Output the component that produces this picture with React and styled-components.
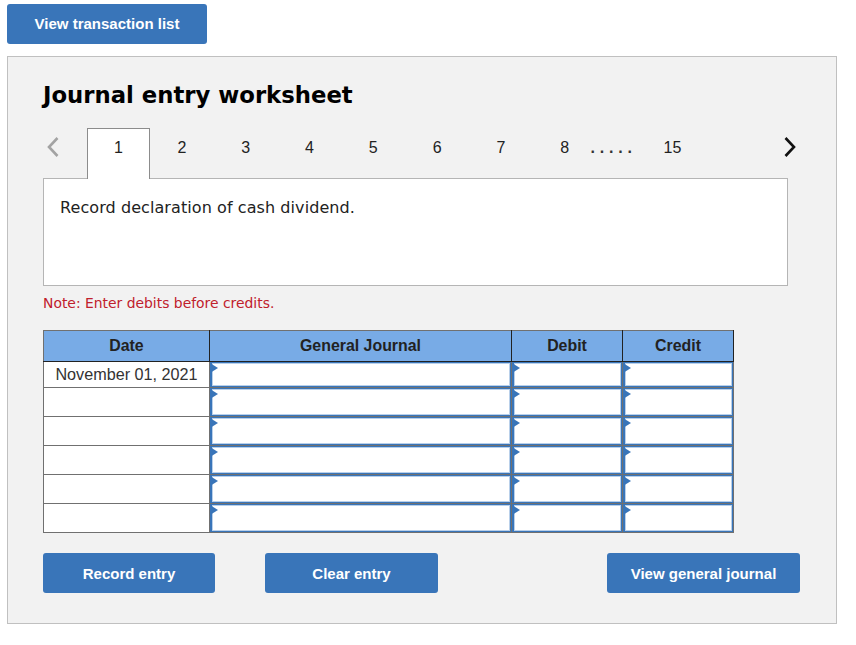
import styled, { createGlobalStyle } from "styled-components";

const GlobalStyle = createGlobalStyle`
  html, body {
    margin: 0;
    background: #ffffff;
    font-family: "Liberation Sans", Arial, sans-serif;
  }
`;

const tabs = ["1", "2", "3", "4", "5", "6", "7", "8"];
const rows = ["November 01, 2021", "", "", "", "", ""];

export default function App() {
  return (
    <Page>
      <GlobalStyle />
      <TopButton>View transaction list</TopButton>
      <Panel>
        <Title>Journal entry worksheet</Title>
        <TabRow>
          <Arrow>
            <svg width="14" height="22" viewBox="0 0 14 22">
              <path d="M11.5 2 L3 11 L11.5 20" fill="none" stroke="#a3a3a3" strokeWidth="2.6" />
            </svg>
          </Arrow>
          {tabs.map((t, i) => (
            <Tab key={t} active={i === 0}>{t}</Tab>
          ))}
          <Dots>.....</Dots>
          <LastTab>15</LastTab>
          <NextArrow>
            <svg width="14" height="22" viewBox="0 0 14 22">
              <path d="M2.5 2 L11 11 L2.5 20" fill="none" stroke="#111111" strokeWidth="2.6" />
            </svg>
          </NextArrow>
        </TabRow>
        <Description>Record declaration of cash dividend.</Description>
        <Note>Note: Enter debits before credits.</Note>
        <Table>
          <colgroup>
            <col width="166" />
            <col width="302" />
            <col width="111" />
            <col width="111" />
          </colgroup>
          <thead>
            <tr>
              <Head>Date</Head>
              <Head>General Journal</Head>
              <Head>Debit</Head>
              <Head>Credit</Head>
            </tr>
          </thead>
          <tbody>
            {rows.map((date, i) => (
              <Row key={i} first={i === 0}>
                <DateCell>{date}</DateCell>
                <EntryCell><Field /></EntryCell>
                <EntryCell><Field /></EntryCell>
                <EntryCell><Field /></EntryCell>
              </Row>
            ))}
          </tbody>
        </Table>
        <Actions>
          <ActionButton width={172}>Record entry</ActionButton>
          <ActionButton width={173}>Clear entry</ActionButton>
          <ActionButton width={193} push>View general journal</ActionButton>
        </Actions>
      </Panel>
    </Page>
  );
}

const Page = styled.div`
  padding: 4px 19px 21px 7px;
`;

const Button = styled.button`
  height: 40px;
  border: none;
  border-radius: 3px;
  background: #3975b9;
  color: #ffffff;
  font-family: "Liberation Sans", Arial, sans-serif;
  font-size: 15px;
  font-weight: 700;
  padding: 0;
`;

const TopButton = styled(Button)`
  display: block;
  width: 200px;
  padding-bottom: 2px;
`;

const Panel = styled.div`
  margin-top: 12px;
  height: 566px;
  border: 1px solid #c0c0c0;
  background: #f2f2f2;
  padding: 0 35px;
`;

const Title = styled.h1`
  margin: 0;
  padding-top: 23px;
  height: 48px;
  font-family: "DejaVu Sans", Verdana, sans-serif;
  font-size: 22.75px;
  line-height: 31px;
  font-weight: 700;
  color: #000000;
`;

const TabRow = styled.div`
  display: flex;
  align-items: flex-start;
  height: 50px;
  position: relative;
  z-index: 1;
`;

const Arrow = styled.div`
  flex: none;
  width: 44px;
  height: 38px;
  display: flex;
  align-items: center;
  padding-left: 3px;
  box-sizing: border-box;
`;

const NextArrow = styled(Arrow)`
  width: 20px;
  margin-left: 91px;
  padding-left: 0;
`;

const Tab = styled.div`
  flex: none;
  box-sizing: border-box;
  width: ${(p) => (p.active ? "63px" : "63.8px")};
  height: 51px;
  padding-top: ${(p) => (p.active ? "10px" : "11px")};
  text-align: center;
  font-size: 16px;
  line-height: 18px;
  color: #222222;
  background: ${(p) => (p.active ? "#ffffff" : "transparent")};
  border: ${(p) => (p.active ? "1px solid #8c8c8c" : "none")};
  border-bottom: none;
`;

const Dots = styled.div`
  flex: none;
  width: 51px;
  margin-left: -6px;
  padding-top: 11px;
  font-size: 16px;
  line-height: 18px;
  font-weight: 700;
  letter-spacing: 4.8px;
  color: #333333;
`;

const LastTab = styled.div`
  flex: none;
  width: 28px;
  margin-left: 22px;
  padding-top: 11px;
  font-size: 16px;
  line-height: 18px;
  color: #222222;
`;

const Description = styled.div`
  box-sizing: border-box;
  width: 745px;
  height: 108px;
  background: #ffffff;
  border: 1px solid #b5b5b5;
  padding: 19px 16px;
  font-family: "DejaVu Sans", Verdana, sans-serif;
  font-size: 16px;
  letter-spacing: 0.08px;
  line-height: 20px;
  color: #222222;
`;

const Note = styled.div`
  margin-top: 8px;
  height: 36px;
  font-family: "DejaVu Sans", Verdana, sans-serif;
  font-size: 13.9px;
  line-height: 18px;
  color: #c0202c;
`;

const Table = styled.table`
  width: 690px;
  table-layout: fixed;
  border-collapse: collapse;
  background: #ffffff;
`;

const Head = styled.th`
  height: 30px;
  padding: 0;
  background: #78abe6;
  border: 1px solid #222222;
  border-top-color: #707070;
  font-size: 15.9px;
  font-weight: 700;
  color: #222222;
  &:first-child {
    border-left-color: #707070;
  }
`;

const Row = styled.tr`
  height: ${(p) => (p.first ? "25px" : "28px")};
`;

const DateCell = styled.td`
  padding: 0;
  border: 1px solid #707070;
  text-align: center;
  font-size: 16.2px;
  color: #333333;
`;

const EntryCell = styled.td`
  padding: 0;
  border: 1px solid #707070;
  height: inherit;
  position: relative;
`;

const Field = styled.div`
  position: absolute;
  inset: 0;
  box-sizing: border-box;
  border: 1px solid #3975b9;
  border-left-width: 2px;
  box-shadow: inset 0 0 0 1px #b9d0ea;
  background: #ffffff;
  &::before {
    content: "";
    position: absolute;
    left: -2px;
    top: 0;
    border-left: 8px solid #3975b9;
    border-top: 5px solid transparent;
    border-bottom: 5px solid transparent;
  }
`;

const Actions = styled.div`
  display: flex;
  gap: 50px;
  margin-top: 20px;
  width: 757px;
`;

const ActionButton = styled(Button)`
  width: ${(p) => p.width}px;
  margin-left: ${(p) => (p.push ? "auto" : "0")};
`;
